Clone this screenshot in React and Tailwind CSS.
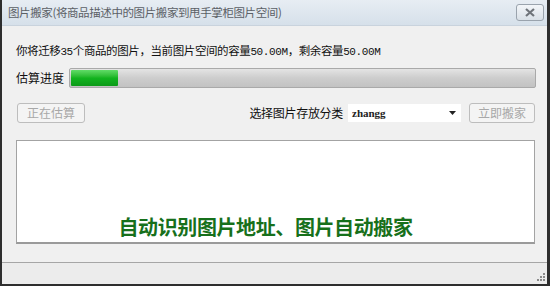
import React from "react";

const font = { fontFamily: '"Noto Sans CJK SC", "Noto Sans", sans-serif' };
const mono = { fontFamily: '"Liberation Mono", monospace' };

function CloseButton() {
  return (
    <button className="w-[28px] h-[17px] mr-[3px] flex items-center justify-center rounded-[3px] border border-[#9aa3ad] bg-gradient-to-b from-[#f3f6f9] to-[#d9e0e7]">
      <svg width="12" height="9" viewBox="0 0 12 9">
        <path d="M2 1 L10 8 M10 1 L2 8" stroke="#6f747a" strokeWidth="2.2" />
      </svg>
    </button>
  );
}

function FlatButton({ label }) {
  return (
    <button
      disabled
      className="w-full h-[20px] rounded-[3px] border border-[#bdbdbd] bg-[#f4f4f4] text-[12px] leading-none text-[#a8a8a8] flex items-center justify-center"
    >
      {label}
    </button>
  );
}

// numbers in the dialog use a narrow fixed-width face
function Num({ children }) {
  return (
    <span className="text-[11px] tracking-[-0.4px]" style={mono}>
      {children}
    </span>
  );
}

export default function App() {
  return (
    <div
      className="w-[550px] h-[286px] flex flex-col bg-[#f0f0f0] border-l-2 border-r-[3px] border-b-2 border-[#2e2e2e] overflow-hidden"
      style={font}
    >
      {/* title bar */}
      <div className="h-[26px] shrink-0 flex items-center justify-between pl-[6px] bg-gradient-to-b from-[#e7edf3] to-[#d6e0ea] border-b border-[#c9d3dd]">
        <span className="text-[11.5px] text-[#5b6066] tracking-[-0.4px]">
          图片搬家(将商品描述中的图片搬家到甩手掌柜图片空间)
        </span>
        <CloseButton />
      </div>

      <div className="flex-1 flex flex-col pl-[14px] pr-[12px]">
        <p className="mt-[16px] h-[16px] text-[11.5px] leading-[16px] text-[#111] tracking-[-0.4px]">
          你将迁移<Num>35</Num>个商品的图片，当前图片空间的容量<Num>50.00M</Num>，剩余容量<Num>50.00M</Num>
        </p>

        <div className="mt-[10px] flex items-center h-[20px]">
          <span className="w-[53px] text-[12px] text-[#111]">估算进度</span>
          <div className="flex-1 h-[20px] mr-[-1px] rounded-[2px] border border-[#a9a9a9] bg-gradient-to-b from-[#e4e4e4] via-[#cdcdcd] to-[#c2c2c2] p-[1px]">
            <div className="w-[47px] h-full rounded-[1px] bg-gradient-to-b from-[#5fdc66] via-[#12b41f] to-[#0c9a18]" />
          </div>
        </div>

        <div className="mt-[15px] flex items-center h-[20px]">
          <div className="ml-[1px] w-[68px]">
            <FlatButton label="正在估算" />
          </div>
          <div className="ml-auto flex items-center">
            <span className="text-[12px] text-[#111] mr-[5px] tracking-[-0.3px]">选择图片存放分类</span>
            <div className="w-[113px] h-[18px] bg-white flex items-center justify-between pl-[4px] pr-[5px]">
              <span
                className="text-[11px] font-bold text-[#222]"
                style={{ fontFamily: '"Liberation Serif", serif' }}
              >
                zhangg
              </span>
              <svg width="7" height="4" viewBox="0 0 7 4">
                <path d="M0 0 H7 L3.5 4 Z" fill="#222" />
              </svg>
            </div>
            <div className="ml-[8px] w-[66px]">
              <FlatButton label="立即搬家" />
            </div>
          </div>
        </div>

        <div className="mt-[17px] h-[104px] bg-white border border-[#a3a3a3] border-b-2 border-b-[#9a9a9a] flex items-end justify-center pb-[5px] pr-[20px]">
          <span className="text-[20px] leading-none font-bold text-[#17701b] tracking-[-0.4px]">
            自动识别图片地址、图片自动搬家
          </span>
        </div>
      </div>

      {/* status bar */}
      <div className="h-[22px] shrink-0 border-t border-[#a6a6a6] bg-[#ececec] flex items-end justify-end pr-[1px] pb-[2px]">
        <svg width="9" height="9" viewBox="0 0 9 9">
          <g fill="#8a8a8a">
            <rect x="6" y="0" width="2" height="2" />
            <rect x="3" y="3" width="2" height="2" />
            <rect x="6" y="3" width="2" height="2" />
            <rect x="0" y="6" width="2" height="2" />
            <rect x="3" y="6" width="2" height="2" />
            <rect x="6" y="6" width="2" height="2" />
          </g>
        </svg>
      </div>
    </div>
  );
}
